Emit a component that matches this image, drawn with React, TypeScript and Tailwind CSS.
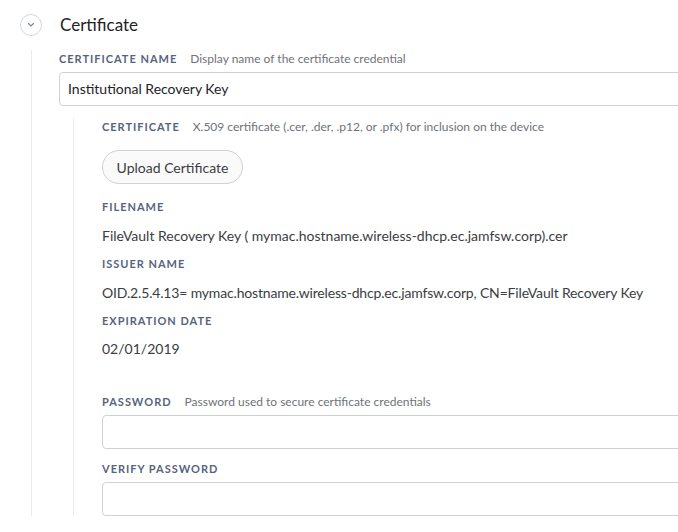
import React from "react";

function Label({ title, hint }: { title: string; hint?: string }) {
  return (
    <div className="flex items-center h-[14px] leading-[14px]">
      <span className="text-[11px] font-bold tracking-[0.09em] text-[#56647c] uppercase">
        {title}
      </span>
      {hint && (
        <span className="ml-[13px] text-[12px] text-[#6f7378]">{hint}</span>
      )}
    </div>
  );
}

function Value({ children, tight }: { children: React.ReactNode; tight?: boolean }) {
  return (
    <div
      className={
        tight
          ? "h-[20px] leading-[20px] text-[14px] text-[#3a3d42] tracking-[-0.012em]"
          : "h-[20px] leading-[20px] text-[14px] text-[#3a3d42]"
      }
    >
      {children}
    </div>
  );
}

export default function App() {
  return (
    <div
      className="w-[678px] h-[532px] overflow-hidden bg-white"
      style={{ fontFamily: "Lato, 'Open Sans', sans-serif" }}
    >
      <div className="w-[760px]">
        <div className="h-[50px] flex items-center">
          <div className="ml-[20px] w-[22px] h-[22px] rounded-full border border-[#d3d8e0] flex items-center justify-center">
            <svg width="8" height="6" viewBox="0 0 8 6">
              <path d="M1.5 1.5 L4 4 L6.5 1.5" fill="none" stroke="#7d8797" strokeWidth="1.1" strokeLinecap="round" strokeLinejoin="round" />
            </svg>
          </div>
          <div className="ml-[18px] text-[17px] text-[#1f2226]">Certificate</div>
        </div>

        <div className="ml-[31px] border-l border-[#e8eaee] pl-[27px] pt-[2px]">
          <Label title="Certificate Name" hint="Display name of the certificate credential" />
          <div className="mt-[6px] h-[34px] rounded-[4px] border border-[#cdd1d8] pl-[8px] pb-[2px] flex items-center text-[14px] text-[#1f2226]">
            Institutional Recovery Key
          </div>

          <div className="ml-[14px] mt-[12px] border-l border-[#e8eaee] pl-[28px] pt-[2px]">
            <Label
              title="Certificate"
              hint="X.509 certificate (.cer, .der, .p12, or .pfx) for inclusion on the device"
            />
            <button className="mt-[16px] h-[34px] w-[141px] rounded-full border border-[#cdd1d8] bg-[#fafafa] text-[14px] text-[#3a3d42]">
              Upload Certificate
            </button>

            <div className="mt-[16px]">
              <Label title="Filename" />
            </div>
            <div className="mt-[12px]">
              <Value>FileVault Recovery Key ( mymac.hostname.wireless-dhcp.ec.jamfsw.corp).cer</Value>
            </div>

            <div className="mt-[11px]">
              <Label title="Issuer Name" />
            </div>
            <div className="mt-[12px]">
              <Value tight>OID.2.5.4.13= mymac.hostname.wireless-dhcp.ec.jamfsw.corp, CN=FileVault Recovery Key</Value>
            </div>

            <div className="mt-[11px]">
              <Label title="Expiration Date" />
            </div>
            <div className="mt-[11px]">
              <Value>02/01/2019</Value>
            </div>

            <div className="mt-[36px]">
              <Label title="Password" hint="Password used to secure certificate credentials" />
            </div>
            <div className="mt-[6px] h-[34px] rounded-[4px] border border-[#cdd1d8]" />

            <div className="mt-[13px]">
              <Label title="Verify Password" />
            </div>
            <div className="mt-[6px] h-[34px] rounded-[4px] border border-[#cdd1d8]" />
          </div>
        </div>
      </div>
    </div>
  );
}
